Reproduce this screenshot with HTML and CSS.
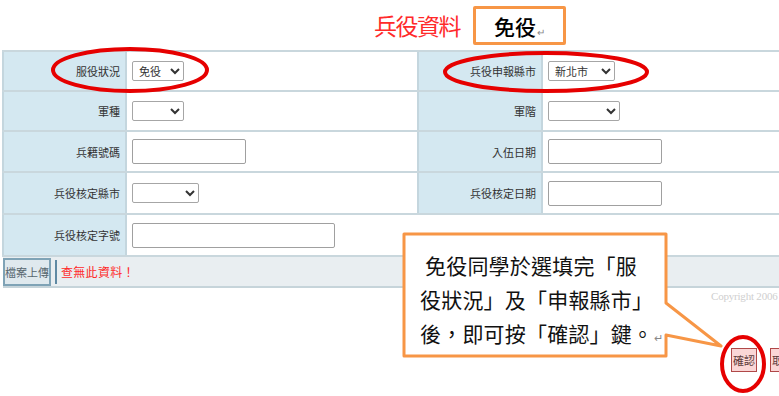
FILE: index.html
```html
<!DOCTYPE html>
<html lang="zh-Hant">

<head>
    <meta charset="UTF-8">
    <title>兵役資料</title>
    <link rel="stylesheet" href="styles.css">
</head>

<body>

    <!-- Titulo -->
    <div class="header">
        <span class="title">兵役資料</span>
        <span class="status-box">免役<span class="ret">↵</span></span>
    </div>

    <!-- Formulario -->
    <table class="form-table">
        <colgroup>
            <col class="c-label">
            <col class="c-value">
            <col class="c-label2">
            <col class="c-value2">
        </colgroup>
        <tr class="r1">
            <td class="label">服役狀況</td>
            <td class="value">
                <select class="sel sel-s">
                    <option>免役</option>
                </select>
            </td>
            <td class="label">兵役申報縣市</td>
            <td class="value">
                <select class="sel sel-m">
                    <option>新北市</option>
                </select>
            </td>
        </tr>
        <tr class="r2">
            <td class="label">軍種</td>
            <td class="value"><select class="sel sel-s"><option></option></select></td>
            <td class="label">軍階</td>
            <td class="value"><select class="sel sel-l"><option></option></select></td>
        </tr>
        <tr class="r3">
            <td class="label">兵籍號碼</td>
            <td class="value"><input type="text" class="txt"></td>
            <td class="label">入伍日期</td>
            <td class="value"><input type="text" class="txt"></td>
        </tr>
        <tr class="r4">
            <td class="label">兵役核定縣市</td>
            <td class="value"><select class="sel sel-w"><option></option></select></td>
            <td class="label">兵役核定日期</td>
            <td class="value"><input type="text" class="txt"></td>
        </tr>
        <tr class="r5">
            <td class="label">兵役核定字號</td>
            <td class="value" colspan="3"><input type="text" class="txt txt-long"></td>
        </tr>
        <tr class="upload-row">
            <td colspan="4">
                <div class="upload-bar">
                    <button class="btn-upload">檔案上傳</button>
                    <span class="sep"></span>
                    <span class="msg">查無此資料！</span>
                </div>
            </td>
        </tr>
    </table>

    <div class="copyright">Copyright 2006</div>

    <div class="actions">
        <button class="btn-ok">確認</button>
        <button class="btn-ok">取消</button>
    </div>

    <!-- Anotaciones -->
    <svg class="notes" width="779" height="396" viewBox="0 0 779 396">
        <ellipse cx="130" cy="70" rx="77" ry="21" fill="none" stroke="#e60000" stroke-width="4" />
        <ellipse cx="546" cy="72" rx="101" ry="19" fill="none" stroke="#e60000" stroke-width="4" />
        <ellipse cx="743" cy="364" rx="21" ry="27" fill="none" stroke="#e60000" stroke-width="4" />
        <path d="M404 234 H666 V303 L721 346 L666 335 V356 H404 Z" fill="#fff" stroke="#f79646"
            stroke-width="3" stroke-linejoin="round" />
    </svg>

    <div class="callout">
        <div class="l1">免役同學於選填完「服</div>
        <div>役狀況」及「申報縣市」</div>
        <div>後，即可按「確認」鍵。<span class="ret">↵</span></div>
    </div>

</body>

</html>
```

FILE: styles.css
```css
body {
    font-family: "Noto Sans CJK TC", sans-serif;
    margin: 0;
    padding: 0;
    background-color: #fff;
    overflow: hidden;
    width: 779px;
    height: 396px;
    position: relative;
}

.header {
    display: flex;
    align-items: center;
    height: 50px;
    padding-left: 374px;
    box-sizing: border-box;
}

.title {
    color: #ff2a2a;
    font-size: 23px;
    letter-spacing: -1.5px;
    line-height: 1;
}

.status-box {
    margin-left: 13px;
    width: 87px;
    height: 31px;
    border: 3px solid #f79646;
    border-radius: 2px;
    display: flex;
    align-items: center;
    justify-content: center;
    font-size: 21px;
    font-weight: 500;
    color: #000;
    line-height: 1;
    padding-top: 2px;
    box-sizing: content-box;
}

.ret {
    font-size: 10px;
    color: #888;
    font-weight: normal;
    margin-left: 1px;
    align-self: flex-end;
    margin-bottom: 5px;
}

.form-table {
    border-collapse: collapse;
    margin-left: 2px;
    width: 900px;
    table-layout: fixed;
    font-size: 11px;
    color: #333;
}

/* anchos de columnas */
.c-label {
    width: 123px;
}

.c-value {
    width: 292px;
}

.c-label2 {
    width: 124px;
}

.c-value2 {
    width: 361px;
}

.form-table td {
    border-top: 2px solid #c9d7dd;
    border-bottom: 2px solid #c9d7dd;
    padding: 0;
}

.label {
    background-color: #d4e8f1;
    text-align: right;
    padding-right: 5px !important;
    border-left: 2px solid #c4d6de;
    border-right: 2px solid #c4d6de;
}

.value {
    padding-left: 5px !important;
}

.r1 td,
.r2 td {
    height: 38px;
}

.r3 td {
    height: 39px;
}

.r4 td,
.r5 td {
    height: 40px;
}

.sel {
    height: 20px;
    border: 1px solid #a6a6a6;
    border-radius: 2px;
    background: #fff;
    font-family: "Noto Sans CJK TC", sans-serif;
    font-size: 11px;
    color: #333;
    padding: 0 0 0 2px;
    display: block;
}

.sel-s {
    width: 52px;
}

.sel-m {
    width: 67px;
}

.sel-l {
    width: 72px;
}

.sel-w {
    width: 67px;
}

.txt {
    width: 114px;
    height: 25px;
    border: 1px solid #a0a0a0;
    border-radius: 2px;
    box-sizing: border-box;
    display: block;
}

.txt-long {
    width: 203px;
}

.upload-row td {
    background-color: #e9eef1;
    height: 29px;
    border-bottom: 2px solid #c6d4da;
}

.upload-bar {
    display: flex;
    align-items: center;
    height: 29px;
}

.btn-upload {
    width: 48px;
    height: 28px;
    border: 2px solid #7fa3b6;
    background-color: #dfe9ee;
    color: #56666e;
    font-family: "Noto Sans CJK TC", sans-serif;
    font-size: 11px;
    padding: 0;
    margin: 0;
}

.sep {
    width: 2px;
    height: 24px;
    background-color: #5f89a3;
    margin-left: 4px;
    margin-right: 4px;
}

.msg {
    color: #ff2a2a;
    font-size: 12px;
    letter-spacing: 0.3px;
}

.copyright {
    padding-left: 711px;
    margin-top: 2px;
    font-family: "Liberation Serif", serif;
    font-size: 11px;
    letter-spacing: -0.2px;
    color: #cfcfcf;
    white-space: nowrap;
}

.actions {
    display: flex;
    gap: 13px;
    padding-left: 731px;
    margin-top: 46px;
}

.btn-ok {
    width: 26px;
    height: 24px;
    padding: 0;
    border: 1px solid #b04848;
    background-color: #fad6d6;
    color: #5a3a3a;
    font-family: "Noto Sans CJK TC", sans-serif;
    font-size: 11px;
    flex: none;
}

/* capa de anotaciones */
.notes {
    position: absolute;
    left: 0;
    top: 0;
    pointer-events: none;
}

.callout {
    position: absolute;
    left: 420px;
    top: 248px;
    width: 240px;
    font-size: 21px;
    line-height: 34px;
    color: #111;
    letter-spacing: 0.2px;
    white-space: nowrap;
}

.callout .l1 {
    padding-left: 5px;
}

.callout .ret {
    font-size: 11px;
    margin-bottom: 0;
}
```
